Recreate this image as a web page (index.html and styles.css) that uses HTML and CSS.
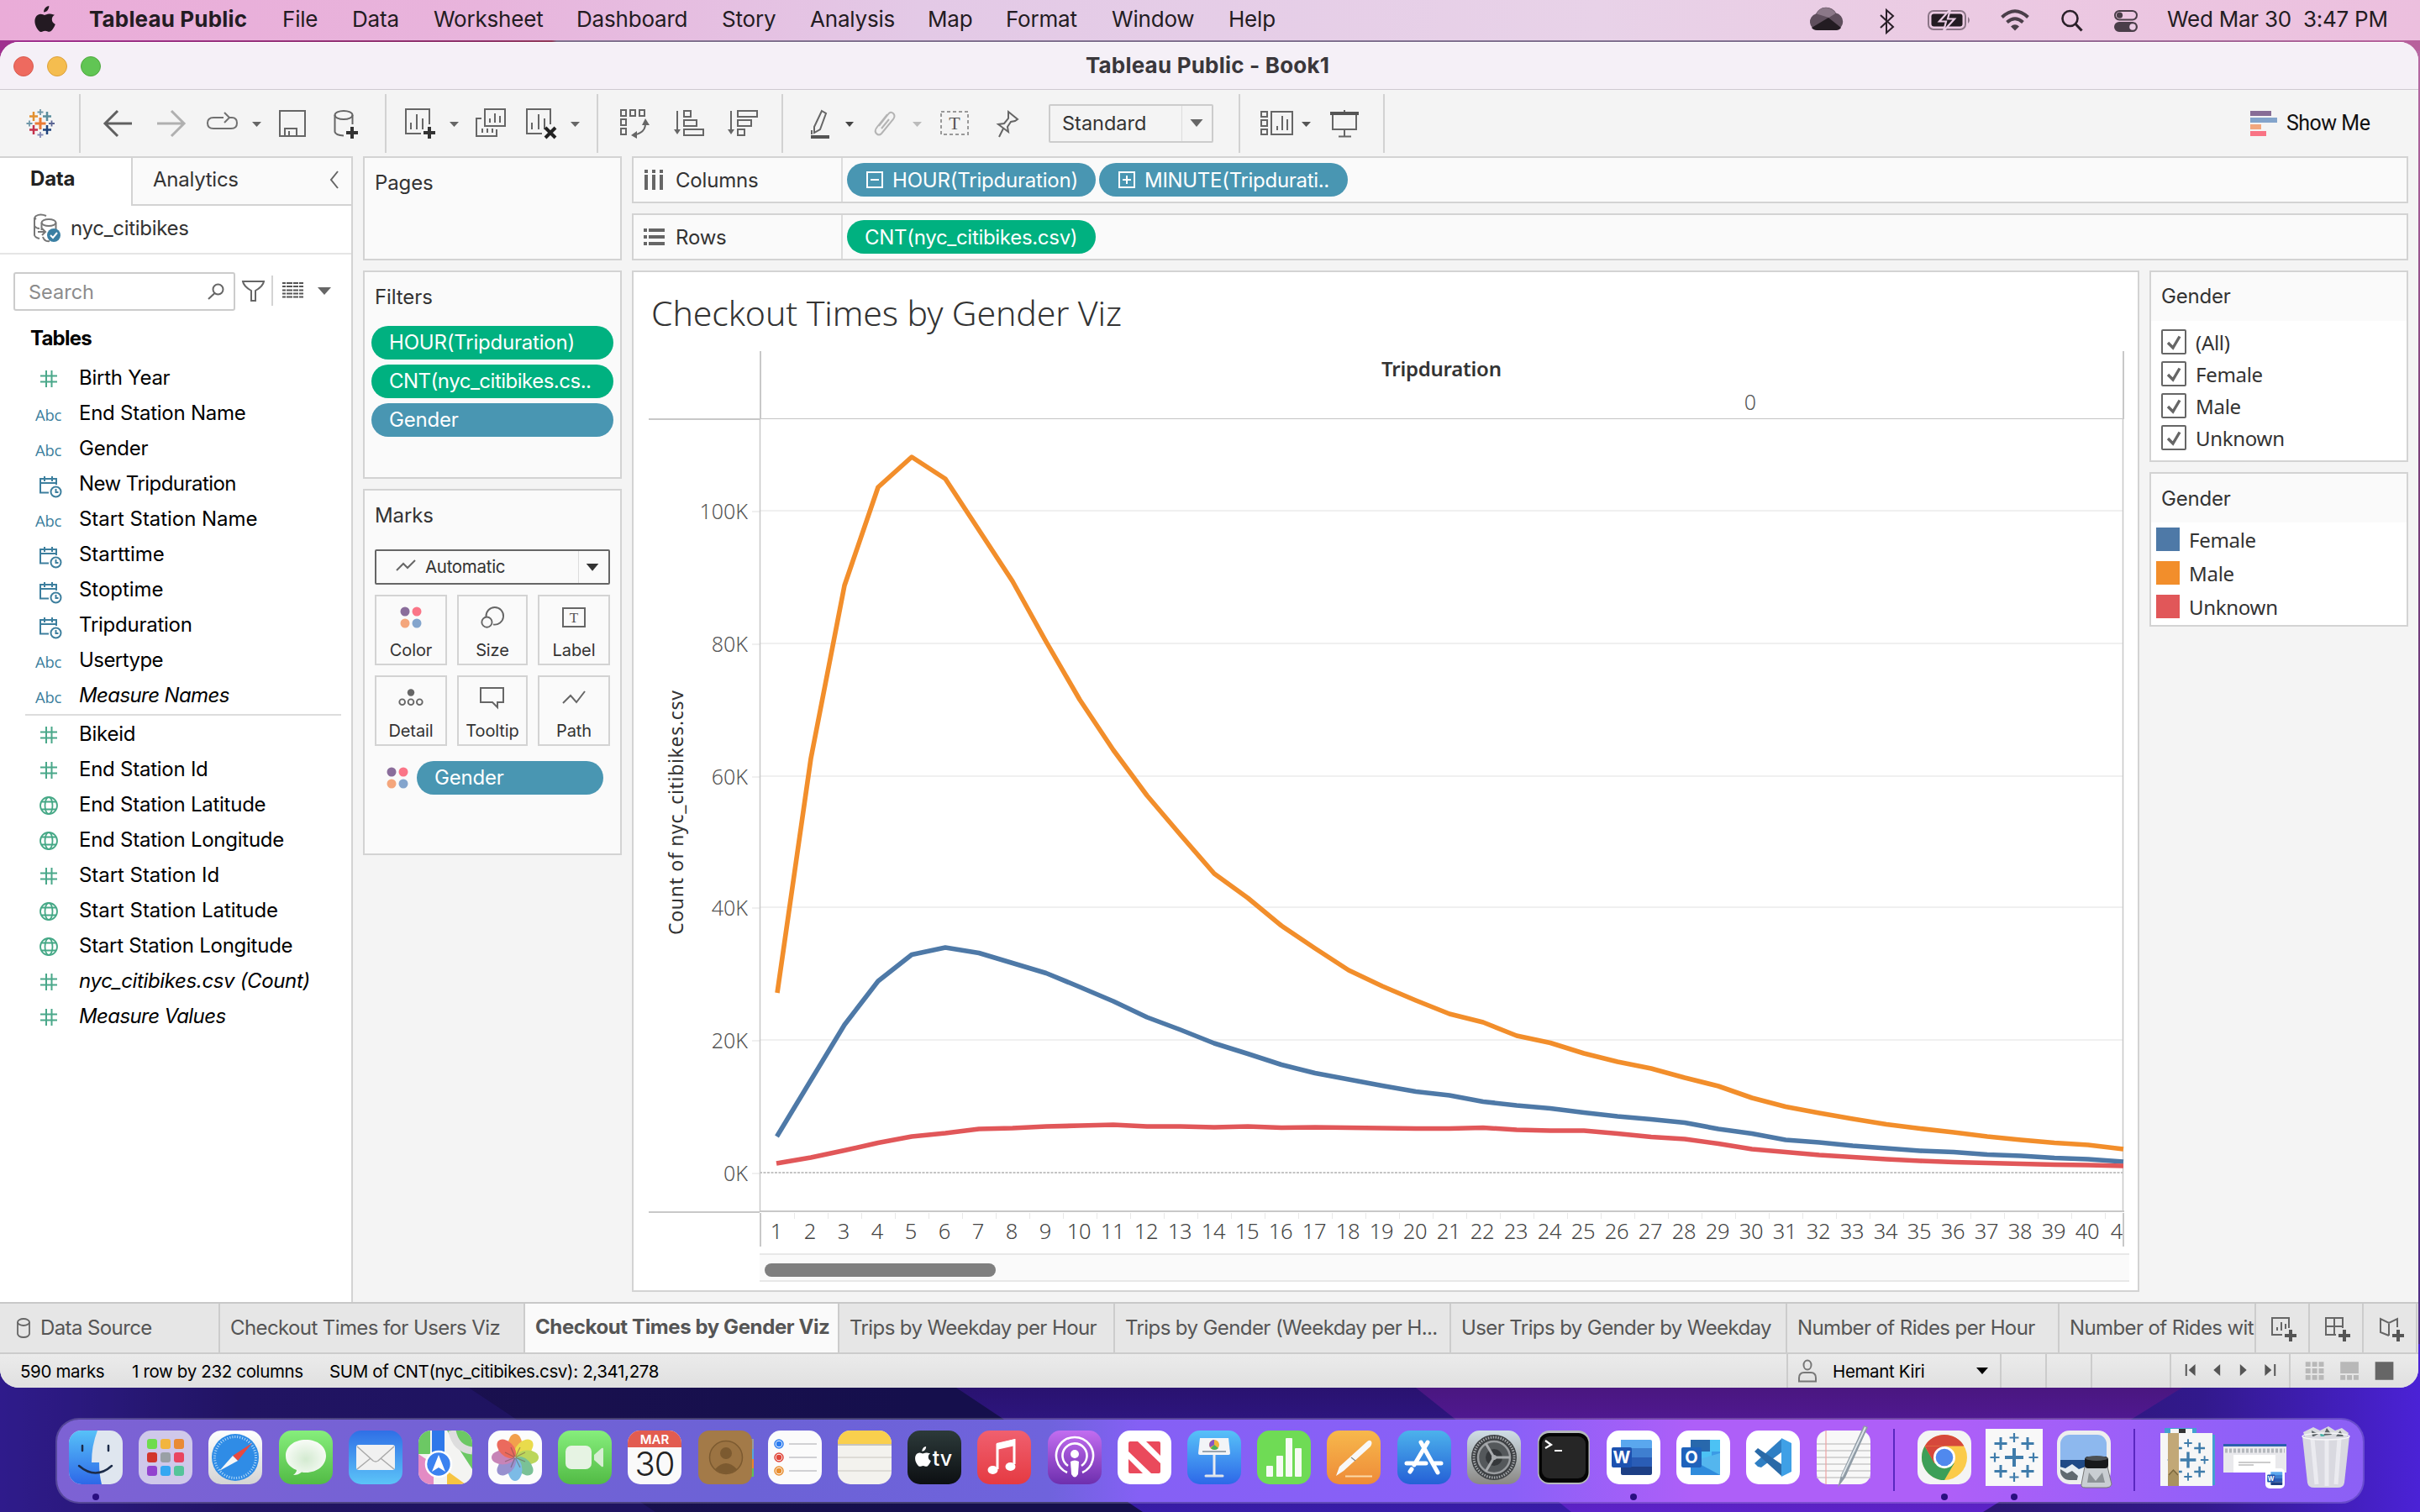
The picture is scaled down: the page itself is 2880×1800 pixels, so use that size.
FILE: index.html
```html
<!DOCTYPE html>
<html lang="en">
<head>
<meta charset="utf-8">
<title>Tableau Public - Book1</title>
<link rel="stylesheet" href="styles.css">
</head>
<body>
<svg class="defs" width="0" height="0">
  <defs>
    <symbol id="num" viewBox="0 0 32 24"><path d="M13 2v20M19.500 2v20M6 8.500h20M6 15.500h20" fill="none" stroke="#4aa88a" stroke-width="2"/></symbol>
    <symbol id="geo" viewBox="0 0 32 24"><g fill="none" stroke="#45a886" stroke-width="1.800"><circle cx="16" cy="12" r="10"/><ellipse cx="16" cy="12" rx="4.500" ry="10"/><path d="M7.500 7.500h17M7.500 16.500h17"/></g></symbol>
    <symbol id="date" viewBox="0 0 32 28"><g fill="none" stroke="#3d7f9e" stroke-width="2"><path d="M16 21.500H6V5h19v7M6 10h19M11 2v6M20 2v6"/><circle cx="24.500" cy="20.500" r="6"/><path d="M24.500 17v4h3"/></g></symbol>
    <symbol id="dots" viewBox="0 0 28 28"><circle cx="7" cy="7" r="5.500" fill="#8a6d9b"/><circle cx="21" cy="7" r="5.500" fill="#fa7587"/><circle cx="7" cy="21" r="5.500" fill="#f4a67c"/><circle cx="21" cy="21" r="5.500" fill="#84a5cd"/></symbol>
    <symbol id="check" viewBox="0 0 30 30"><rect x="1" y="1" width="28" height="28" rx="1" fill="#fff" stroke="#666" stroke-width="2"/><path d="M8 16l6 6L22 8.500" fill="none" stroke="#666" stroke-width="3.400"/></symbol>
    <symbol id="spark" viewBox="-34 -34 68 68">
      <g fill="none" stroke="#3f7cab">
        <path stroke-width="4" d="M0-11V11M-11 0H11"/>
        <path stroke-width="3" d="M-16-24v15M-23.500-16.500h15M16-24v15M8.500-16.500h15M-16 9v15M-23.500 16.500h15M16 9v15M8.500 16.500h15"/>
        <path stroke-width="2.200" d="M0-29v11M-5.500-23.500h11M0 18v11M-5.500 23.500h11M-23-5.500v11M-28.500 0h11M23-5.500v11M17.500 0h11"/>
      </g>
    </symbol>
    <symbol id="wordmark" viewBox="0 0 64 64">
      <path fill="#5aa7ee" d="M17 11h35a2 2 0 0 1 2 2v9H17z"/><path fill="#3f7fd0" d="M17 21h37v11H17z"/><path fill="#2a5db6" d="M17 32h37v11H17z"/><path fill="#1d3f85" d="M17 43h37v8a2 2 0 0 1-2 2H19a2 2 0 0 1-2-2z"/>
      <rect x="6" y="20" width="24" height="24" rx="2" fill="#1d52b0"/><text x="18" y="39" text-anchor="middle" class="tile-letter">W</text>
    </symbol>
    <symbol id="apple" viewBox="0 0 26 31"><path d="M18.300 0c.2 2-.6 3.900-1.700 5.200-1.200 1.400-2.900 2.300-4.500 2.200-.2-1.900.7-3.800 1.700-5C15 1 16.900.1 18.300 0zM25 10.700c-2.100 1.300-3.200 3.100-3.200 5.400 0 2.700 1.500 4.800 4 5.800-.6 1.900-1.600 3.800-2.900 5.500-1.200 1.700-2.400 3.400-4.400 3.400-1.900 0-2.500-1.100-4.800-1.100-2.200 0-2.900 1.100-4.700 1.200-1.900.1-3.300-1.800-4.500-3.500C1.900 23.900.1 17.700 2.600 13.300c1.200-2.200 3.500-3.600 5.900-3.600 1.900 0 3.600 1.200 4.700 1.200 1.100 0 3.200-1.500 5.500-1.300 1 0 3.600.4 6.300 1.100z"/></symbol>
    <linearGradient id="gGreen" x2="0" y2="1"><stop stop-color="#86ee7c"/><stop offset="1" stop-color="#52bb45"/></linearGradient>
    <linearGradient id="gBlue" x2="0" y2="1"><stop stop-color="#2f6fe6"/><stop offset="1" stop-color="#5cc4f8"/></linearGradient>
    <linearGradient id="gSky" x2="0" y2="1"><stop stop-color="#57c1f8"/><stop offset="1" stop-color="#2d68e8"/></linearGradient>
    <linearGradient id="gStore" x2="0" y2="1"><stop stop-color="#4cb2ec"/><stop offset="1" stop-color="#2560d6"/></linearGradient>
    <linearGradient id="gRed" x2="0" y2="1"><stop stop-color="#f0606f"/><stop offset="1" stop-color="#e53a42"/></linearGradient>
    <linearGradient id="gPod" x2="0" y2="1"><stop stop-color="#c26df0"/><stop offset="1" stop-color="#6e2fae"/></linearGradient>
    <linearGradient id="gOrange" x2="0" y2="1"><stop stop-color="#f7b84c"/><stop offset="1" stop-color="#ee8b38"/></linearGradient>
    <linearGradient id="gWhite" x2="0" y2="1"><stop stop-color="#fff"/><stop offset="1" stop-color="#d4d4d4"/></linearGradient>
    <linearGradient id="gDark" x2="0" y2="1"><stop stop-color="#2c3a3a"/><stop offset="1" stop-color="#0c0f12"/></linearGradient>
    <linearGradient id="gGear" x2="0" y2="1"><stop stop-color="#cfdde6"/><stop offset="1" stop-color="#8a8884"/></linearGradient>
    <radialGradient id="gBubble" cx=".5" cy=".55" r=".6"><stop stop-color="#d3ead0"/><stop offset="1" stop-color="#fbfdfa"/></radialGradient>
    <linearGradient id="wTop" x2="1" y2="0"><stop stop-color="#a03090"/><stop offset=".2" stop-color="#8c3068"/><stop offset=".228" stop-color="#903858"/><stop offset=".23" stop-color="#80708e"/><stop offset=".78" stop-color="#807090"/><stop offset="1" stop-color="#b8609c"/></linearGradient>
    <linearGradient id="wBase" x2="1" y2="0"><stop stop-color="#321d90"/><stop offset=".1" stop-color="#1c1150"/><stop offset=".38" stop-color="#150f4c"/></linearGradient>
    <linearGradient id="wRight" x2="1" y2="0"><stop stop-color="#2b1672"/><stop offset=".5" stop-color="#32198c"/><stop offset="1" stop-color="#4b22d6"/></linearGradient>
    <linearGradient id="wSide" x2="0" y2="1"><stop stop-color="#b86aa4"/><stop offset=".3" stop-color="#7a3f78"/><stop offset="1" stop-color="#4a2a86"/></linearGradient>
    <linearGradient id="wMid" x2="0" y2="1"><stop stop-color="#240f5c"/><stop offset="1" stop-color="#381ca8"/></linearGradient>
    <linearGradient id="wPink" x2="0" y2="1"><stop stop-color="#42146a"/><stop offset=".4" stop-color="#4e188c"/><stop offset="1" stop-color="#5c22c8"/></linearGradient>
  </defs>
</svg>

<svg class="wallpaper" viewBox="0 0 2880 1800" aria-hidden="true">
  <rect width="2880" height="1800" fill="url(#wBase)"/>
  <rect width="2880" height="200" fill="url(#wTop)"/>
  <rect x="2800" y="60" width="80" height="1600" fill="url(#wSide)"/>
  <path d="M0 1600h480l300 200H0z" fill="#2b1a84" opacity=".35"/>
  <path d="M1060 1600l300 200h1000V1600z" fill="url(#wMid)"/>
  <path d="M1620 1600l250 200h900V1600z" fill="url(#wPink)"/>
  <path d="M2680 1600l-320 200h520V1600z" fill="url(#wRight)"/>
</svg>

<header class="menubar">
  <svg class="apple" viewBox="0 0 26 31"><use href="#apple" fill="#231a22"/></svg>
  <nav class="menus">
    <span class="m-app">Tableau Public</span><span class="m1">File</span><span class="m2">Data</span><span class="m3">Worksheet</span><span class="m4">Dashboard</span><span class="m5">Story</span><span class="m6">Analysis</span><span class="m7">Map</span><span class="m8">Format</span><span class="m9">Window</span><span class="m10">Help</span>
  </nav>
  <svg class="tray" viewBox="2150 0 400 48">
    <path d="M2163 36a10 10 0 0 1-2-19.500 13.500 13.500 0 0 1 24-1 10.500 10.500 0 0 1 0 20.500z" fill="#5f4f5d"/>
    <path d="M2162 16.500c3-9 17-10 22.500-.5l-8 5z" fill="#8b7888"/>
    <path d="M2156 33l20-12 15 12q-2 3-6 3h-22q-5 0-7-3z" fill="#231c22"/>
    <path d="M2238 18l15 14-8 7V12l8 7-15 14" fill="none" stroke="#2a2029" stroke-width="2"/>
    <rect x="2295" y="13" width="44" height="22" rx="6" fill="none" stroke="#8b7587" stroke-width="2"/><rect x="2298.500" y="16.500" width="37" height="15" rx="3" fill="#231c22"/><path d="M2342 20q4 4 0 8z" fill="#8b7587"/><path d="M2321 11l-13 14.500h8l-3 11.500 13-14.500h-8z" fill="#231c22" stroke="#e9cce4" stroke-width="2.200"/>
    <g fill="none" stroke="#4a3e49" stroke-width="4"><path d="M2382.500 20.500q15.500-14.500 31 0"/><path d="M2388.500 26.500q9.500-8.500 19 0"/></g><path d="M2393 31.500q5-4.500 10 0l-5 5z" fill="#4a3e49"/>
    <circle cx="2463.500" cy="22" r="9" fill="none" stroke="#2a2029" stroke-width="2.600"/><path d="M2470 28.500l7.500 8" stroke="#2a2029" stroke-width="3.200"/>
    <rect x="2517" y="13" width="26" height="10.500" rx="5.200" fill="none" stroke="#4a3e49" stroke-width="2"/><circle cx="2522.500" cy="18.200" r="3.600" fill="#4a3e49"/>
    <rect x="2516" y="26" width="28" height="12" rx="6" fill="#4a3e49"/><circle cx="2538" cy="32" r="3.800" fill="#ebcbe4"/>
  </svg>
  <span class="clock">Wed Mar 30&nbsp; 3:47 PM</span>
</header>

<main class="window">
  <div class="titlebar">
    <i class="light red"></i><i class="light yellow"></i><i class="light green"></i>
    <h1>Tableau Public - Book1</h1>
  </div>

  <div class="toolbar">
    <svg class="tg g1" viewBox="0 111 94 70">
      <g fill="none" stroke-width="2.500"><path stroke="#ea7b35" stroke-width="3" d="M48 139v14M41.500 146h13"/><path stroke="#e2902f" d="M40 132v11M35 137.500h10"/><path stroke="#5a8d9c" d="M56 132v11M51 137.500h10"/><path stroke="#c4314b" d="M40 148v11M35 153.500h10"/><path stroke="#20447c" d="M56 148v11M51 153.500h10"/><g stroke-width="1.800"><path stroke="#6f97a8" d="M48 129v7M44.500 132.500h7M35 142.500v7M31.500 146h7"/><path stroke="#5a6594" d="M61.500 142.500v7M58 146h7"/><path stroke="#8189b5" d="M48 156v7M44.500 159.500h7"/></g></g>
    </svg>
    <svg class="tg g2" viewBox="96 111 362 70">
      <path d="M140 131l-15 15 15 15M125 146h32" fill="none" stroke="#606060" stroke-width="3"/>
      <path d="M204 131l15 15-15 15M219 146h-32" fill="none" stroke="#b0b0b0" stroke-width="3"/>
      <path d="M266 139h-12q-7 0-7 6.500t7 6.500h21q7 0 7-6.500t-6-6.500h-4M267 133l6 6-6 6" fill="none" stroke="#707070" stroke-width="2"/>
      <path d="M300 144h11l-5.500 6z" fill="#666"/>
      <path d="M333 131h30v30h-30zM339 161v-9h14v9M344 155v6" fill="none" stroke="#666" stroke-width="2"/>
      <ellipse cx="409" cy="136" rx="10.500" ry="5" fill="none" stroke="#666" stroke-width="2"/><path d="M398.500 136v20q1 4 10.500 4.500M419.500 136v11" fill="none" stroke="#666" stroke-width="2"/><path d="M419 150v14M412 157h14" stroke="#333" stroke-width="4"/>
    </svg>
    <svg class="tg g3" viewBox="460 111 250 70">
      <g fill="none" stroke="#666" stroke-width="2"><path d="M511 147v-18h-28v29h18M489 153v-8M496 153v-18M503 153v-13"/>
      <path d="M577 129h24v20h-24zM583 145v-5M589 145v-11M595 145v-8M573 140h-6v21h24v-8M574 157v-5M580 157v-5M586 157v-5"/>
      <path d="M655 147v-18h-28v29h18M633 153v-8M641 153v-18M648 153v-13"/></g>
      <path d="M511 150v14M504 157h14" stroke="#333" stroke-width="4"/><path d="M649 151l12 12M661 151l-12 12" stroke="#222" stroke-width="4"/>
      <path d="M535 144h11l-5.500 6zM679 144h11l-5.500 6z" fill="#666"/>
    </svg>
    <svg class="tg g4" viewBox="712 111 218 70">
      <g fill="none" stroke="#666" stroke-width="2"><path d="M739 130h6v7h-6zM750 130h6v7h-6zM761 130h6v7h-6zM739 141h6v7h-6zM739 152h6v7h-6z"/><path d="M768 145q1 12-14 15"/>
      <path d="M806 131v24M814 131h8v7h-8zM814 142h15v7h-15zM814 153h23v7h-23zM870 131v24M878 131h23v7h-23zM878 142h16v7h-16zM878 153h8v7h-8z"/></g>
      <path d="M768 140l5 8h-9zM751 160l7-5v9zM802 153h8l-4 6zM866 153h8l-4 6z" fill="#666"/>
    </svg>
    <svg class="tg g5" viewBox="932 111 316 70">
      <path d="M978 131l5 3-7 19-7 4v-7zM966 154v5" fill="none" stroke="#666" stroke-width="2"/><path d="M965 160h22v4h-22z" fill="#555"/><path d="M1006 144h10l-5 6z" fill="#444"/>
      <path d="M1046 149l11-14q3-4 6-1t0 7l-14 17q-3 3-6 0t1-8l12-15M1049 152l9-11" fill="none" stroke="#b4b4b4" stroke-width="2"/><path d="M1086 144h11l-5.500 6z" fill="#bbb"/>
      <rect x="1120" y="132" width="32" height="27" fill="none" stroke="#999" stroke-width="2" stroke-dasharray="4 3"/><text class="t-serif" x="1136" y="153" text-anchor="middle" font-size="22">T</text>
      <path d="M1200 132l11 9-3 2-5 1-4 6 1 6-12-9 7-1 5-6zM1194 152l-5 10" fill="none" stroke="#666" stroke-width="2"/>
    </svg>
    <div class="select"><span>Standard</span><svg viewBox="0 0 34 42"><path d="M9 16h15l-7.500 9z" fill="#666"/></svg></div>
    <svg class="tg g6" viewBox="1476 111 170 70">
      <g fill="none" stroke="#666" stroke-width="2"><path d="M1501 132h7v6h-7zM1501 142h7v7h-7zM1501 153h7v6h-7zM1513 132h25v27h-25zM1520 154v-5M1526 154v-17M1532 154v-13"/>
      <path d="M1586 135v18h28v-18M1600 130v3M1600 153v8M1593 161.500h15"/></g><path d="M1583 132h34v4h-34z" fill="#555"/><path d="M1549 144h11l-5.500 6z" fill="#555"/>
    </svg>
    <div class="showme"><svg viewBox="0 0 32 30"><path d="M0 0h25v6H0z" fill="#876d96"/><path d="M0 8h32v6H0z" fill="#83a4cb"/><path d="M0 16h13v6H0z" fill="#f3a77e"/><path d="M0 24h19v6H0z" fill="#f97384"/></svg><span>Show Me</span></div>
  </div>

  <div class="workspace">
    <aside class="data-pane">
      <div class="pane-tabs"><b>Data</b><div><span>Analytics</span><svg viewBox="0 0 12 22"><path d="M10 1L2 11l8 10" fill="none" stroke="#666" stroke-width="2"/></svg></div></div>
      <div class="source">
        <svg viewBox="0 0 36 36"><g fill="none" stroke="#777" stroke-width="2"><path d="M17 3Q10 0 5 3q-3 2 0 4M3 5v21q1 3 6 4M3 15q2 3 6 3"/><ellipse cx="20" cy="11" rx="8.500" ry="4"/><path d="M11.500 11v9M28.500 11v8M7 22h8M12 18l4 4-4 4M13 28q2 6 8 5"/></g><circle cx="26" cy="26" r="8" fill="#3a7fa3"/><path d="M22 26l3 3 5-6" fill="none" stroke="#fff" stroke-width="2"/></svg>
        <span>nyc_citibikes</span>
      </div>
      <div class="search-row">
        <div class="search"><span>Search</span><svg viewBox="0 0 20 20"><circle cx="12.500" cy="7.500" r="6" fill="none" stroke="#666" stroke-width="2"/><path d="M8.500 12L1 19" stroke="#666" stroke-width="2"/></svg></div>
        <svg class="filter-tools" viewBox="284 324 130 46"><path d="M289 335h25q-1 6-10 11v12h-5v-12q-9-5-10-11z" fill="none" stroke="#666" stroke-width="2"/><path d="M324 328v36" stroke="#d4d4d4" stroke-width="2"/><path d="M336 337h25M336 341h25M336 345.500h25M336 349.500h25M336 353.500h25" stroke="#555" stroke-width="2" stroke-dasharray="4 1 7 1 6 1 5 0"/><path d="M378 342h16l-8 9z" fill="#666"/></svg>
      </div>
      <h2>Tables</h2>
      <ul class="fields">
        <li><svg class="fi"><use href="#num"/></svg>Birth Year</li>
        <li><i>Abc</i>End Station Name</li>
        <li><i>Abc</i>Gender</li>
        <li><svg class="fd"><use href="#date"/></svg><span class="tight">New Tripduration</span></li>
        <li><i>Abc</i><span class="loose">Start Station Name</span></li>
        <li><svg class="fd"><use href="#date"/></svg><span class="loose">Starttime</span></li>
        <li><svg class="fd"><use href="#date"/></svg><span class="loose">Stoptime</span></li>
        <li><svg class="fd"><use href="#date"/></svg>Tripduration</li>
        <li><i>Abc</i><span class="tight">Usertype</span></li>
        <li><i>Abc</i><em>Measure Names</em></li>
      </ul>
      <ul class="fields measures">
        <li><svg class="fi"><use href="#num"/></svg>Bikeid</li>
        <li><svg class="fi"><use href="#num"/></svg>End Station Id</li>
        <li><svg class="fi"><use href="#geo"/></svg>End Station Latitude</li>
        <li><svg class="fi"><use href="#geo"/></svg>End Station Longitude</li>
        <li><svg class="fi"><use href="#num"/></svg><span class="loose">Start Station Id</span></li>
        <li><svg class="fi"><use href="#geo"/></svg><span class="loose">Start Station Latitude</span></li>
        <li><svg class="fi"><use href="#geo"/></svg>Start Station Longitude</li>
        <li><svg class="fi"><use href="#num"/></svg><em class="count">nyc_citibikes.csv (Count)</em></li>
        <li><svg class="fi"><use href="#num"/></svg><em>Measure Values</em></li>
      </ul>
    </aside>

    <section class="cards">
      <div class="card pages"><h3>Pages</h3></div>
      <div class="card filters"><h3>Filters</h3>
        <div class="pill green">HOUR(Tripduration)</div><div class="pill green narrow">CNT(nyc_citibikes.cs..</div><div class="pill blue">Gender</div>
      </div>
      <div class="card marks"><h3>Marks</h3>
        <div class="mark-type"><svg class="zig" viewBox="0 0 24 14"><path d="M1 13l8-8 5 5 9-9" fill="none" stroke="#666" stroke-width="2"/></svg><span>Automatic</span><svg class="arrow" viewBox="0 0 36 38"><path d="M9 15h15l-7.500 9z" fill="#333"/></svg></div>
        <div class="mark-grid">
          <div><svg viewBox="0 0 28 28"><use href="#dots"/></svg>Color</div>
          <div><svg viewBox="0 0 32 28"><g fill="none" stroke="#666" stroke-width="2"><path d="M8 13A11 11 0 1 1 17 23"/><circle cx="9" cy="20" r="6.500"/></g></svg>Size</div>
          <div><svg viewBox="0 0 28 28"><rect x="1" y="3" width="26" height="22" fill="none" stroke="#666" stroke-width="2"/><text class="t-serif" x="14" y="20" text-anchor="middle" font-size="17">T</text></svg>Label</div>
          <div><svg viewBox="0 0 32 28"><circle cx="16" cy="7" r="4.500" fill="#666"/><g fill="none" stroke="#666" stroke-width="2"><circle cx="5" cy="19" r="3.600"/><circle cx="16" cy="19" r="3.600"/><circle cx="27" cy="19" r="3.600"/></g></svg>Detail</div>
          <div><svg viewBox="0 0 30 28"><path d="M1 2h27v17h-7v6l-6-6H1z" fill="none" stroke="#666" stroke-width="2"/></svg>Tooltip</div>
          <div><svg viewBox="0 0 30 28"><path d="M2 20l9-9 7 8L28 6" fill="none" stroke="#666" stroke-width="2"/></svg>Path</div>
        </div>
        <div class="mark-pill"><svg viewBox="0 0 28 28"><use href="#dots"/></svg><div class="pill blue">Gender</div></div>
      </div>
    </section>

    <section class="canvas">
      <div class="shelf"><div class="shelf-name"><svg viewBox="0 0 26 26"><path d="M3 1v4M12 1v4M21 1v4M3 7v18M12 7v18M21 7v18" stroke="#666" stroke-width="4"/></svg>Columns</div>
        <div class="pill blue wide"><svg viewBox="0 0 20 20"><path d="M1 1h18v18H1zM5 10h10" fill="none" stroke="#fff" stroke-width="2"/></svg>HOUR(Tripduration)</div>
        <div class="pill blue wide min"><svg viewBox="0 0 20 20"><path d="M1 1h18v18H1zM5 10h10M10 5v10" fill="none" stroke="#fff" stroke-width="2"/></svg>MINUTE(Tripdurati..</div></div>
      <div class="shelf"><div class="shelf-name"><svg viewBox="0 0 26 26"><path d="M0 5h4M0 13h4M0 21h4M6 5h19M6 13h19M6 21h19" stroke="#666" stroke-width="4"/></svg>Rows</div>
        <div class="pill green wide cnt">CNT(nyc_citibikes.csv)</div></div>
      <div class="stage">
        <div class="viz">
          <svg class="plot" viewBox="754 324 1790 1120">
            <text class="book title" x="775" y="388" textLength="560">Checkout Times by Gender Viz</text>
            <text class="book semi" x="1644" y="448" textLength="143">Tripduration</text>
            <text class="book tick" x="2083" y="488" text-anchor="middle">0</text>
            <path d="M905 418v80M2527 418v80M772 499h133" stroke="#c8c8c8" stroke-width="2"/>
            <path d="M904 498.500h1624" stroke="#c4c4c4" stroke-width="1"/>
            <g stroke="#f0f0f0" stroke-width="2"><path d="M904 608h1623M904 766h1623M904 924h1623M904 1080h1623M904 1238h1623M895 609h9M895 767h9M895 925h9M895 1081h9M895 1239h9M895 1397h9"/></g>
            <path d="M904 1396h1623" stroke="#c4c4c4" stroke-width="2" stroke-dasharray="3 1.500"/>
            <path d="M904.500 498v945M2526.500 498v945" stroke="#c8c8c8" stroke-width="1.500"/>
            <g class="book tick" text-anchor="end"><text x="890" y="618">100K</text><text x="890" y="776">80K</text><text x="890" y="934">60K</text><text x="890" y="1090">40K</text><text x="890" y="1248">20K</text><text x="890" y="1406">0K</text></g>
            <text class="book axis" transform="translate(813 1113) rotate(-90)" textLength="291">Count of nyc_citibikes.csv</text>
            <g fill="none" stroke-width="5.600" stroke-linejoin="round">
              <path stroke="#f28e2b" d="M925 1182L965 903 1005 697 1045 580 1085 544 1125 570 1165 631 1205 692 1245 764 1285 833 1325 893 1365 947 1405 994 1445 1040 1485 1069 1525 1102 1565 1129 1605 1155 1645 1174 1685 1191 1725 1207 1765 1217 1805 1233 1845 1241.500 1885 1254 1925 1264 1965 1272 2005 1283 2045 1293 2085 1307 2125 1317.500 2165 1325 2205 1332 2245 1338.500 2285 1343.500 2325 1348 2365 1353 2405 1357 2445 1360.500 2485 1363 2527 1368"/>
              <path stroke="#4e79a7" d="M924.500 1353L965 1286 1005 1220 1045 1168 1085 1136.500 1125 1128 1165 1134.500 1205 1146.500 1245 1158.500 1285 1175 1325 1192 1365 1211 1405 1226 1445 1242 1485 1254.500 1525 1267.500 1565 1277.500 1605 1285 1645 1292.500 1685 1299.500 1725 1304 1765 1311.500 1805 1316 1845 1319.500 1885 1324.500 1925 1329 1965 1332.500 2005 1336.500 2045 1344 2085 1349.500 2125 1357 2165 1360 2205 1364 2245 1367 2285 1370 2325 1371.500 2365 1374.500 2405 1376 2445 1378.500 2485 1380 2527 1383"/>
              <path stroke="#e15759" d="M924 1385L965 1378 1005 1369.500 1045 1360.500 1085 1353 1125 1349 1165 1344 1205 1343 1245 1341 1285 1340 1325 1339 1365 1341 1405 1341 1445 1342 1485 1341 1525 1342.500 1565 1342 1605 1342.500 1645 1343 1685 1343.500 1725 1343.500 1765 1342.500 1805 1345 1845 1346 1885 1346 1925 1349.500 1965 1353.500 2005 1356 2045 1361.500 2085 1368 2125 1371.500 2165 1375 2205 1377.500 2245 1380 2285 1382 2325 1383.500 2365 1384.500 2405 1385.500 2445 1386.500 2485 1387 2527 1388"/>
            </g>
            <path d="M904 1442h1624M772 1443h132" stroke="#c8c8c8" stroke-width="2"/>
          </svg>
          <div class="x-axis"><span>1</span><span>2</span><span>3</span><span>4</span><span>5</span><span>6</span><span>7</span><span>8</span><span>9</span><span>10</span><span>11</span><span>12</span><span>13</span><span>14</span><span>15</span><span>16</span><span>17</span><span>18</span><span>19</span><span>20</span><span>21</span><span>22</span><span>23</span><span>24</span><span>25</span><span>26</span><span>27</span><span>28</span><span>29</span><span>30</span><span>31</span><span>32</span><span>33</span><span>34</span><span>35</span><span>36</span><span>37</span><span>38</span><span>39</span><span>40</span><span class="last">4</span></div>
          <div class="track"><div class="thumb"></div></div>
        </div>
        <div class="legends">
          <div class="legend checks"><h3>Gender</h3>
            <p><svg><use href="#check"/></svg>(All)</p><p><svg><use href="#check"/></svg>Female</p><p><svg><use href="#check"/></svg>Male</p><p><svg><use href="#check"/></svg>Unknown</p></div>
          <div class="legend colors"><h3>Gender</h3>
            <p><b class="c-female"></b>Female</p><p><b class="c-male"></b>Male</p><p><b class="c-unknown"></b>Unknown</p></div>
        </div>
      </div>
    </section>
  </div>

  <div class="sheets">
    <div class="s0"><svg viewBox="0 0 16 24"><g fill="none" stroke="#666" stroke-width="1.800"><ellipse cx="8" cy="5" rx="7" ry="4"/><path d="M1 5v14q1 4 7 4t7-4V5"/></g></svg>Data Source</div>
    <div class="s1">Checkout Times for Users Viz</div>
    <div class="s2 active">Checkout Times by Gender Viz</div>
    <div class="s3">Trips by Weekday per Hour</div>
    <div class="s4">Trips by Gender (Weekday per H...</div>
    <div class="s5">User Trips by Gender by Weekday</div>
    <div class="s6">Number of Rides per Hour</div>
    <div class="s7">Number of Rides wit</div>
    <svg class="sheet-tools" viewBox="2685 1552 191 58">
      <g fill="none" stroke="#666" stroke-width="2"><path d="M2724 1581v-12h-20v20h12M2710 1584v-4M2715 1584v-10M2720 1582v-6M2788 1581v-12h-20v20h12M2778 1569v20M2768 1579h20M2853 1580v-10l-10 5-10-5v16l10 4M2843 1575v15"/></g>
      <path d="M2726 1583v14M2719 1590h14M2790 1583v14M2783 1590h14M2854 1583v14M2847 1590h14" stroke="#555" stroke-width="4"/>
      <path d="M2748 1552v58M2812 1552v58M2876 1552v58" stroke="#ccc" stroke-width="2"/>
    </svg>
  </div>
  <div class="status">
    <span class="st1">590 marks</span><span class="st2">1 row by 232 columns</span><span class="st3">SUM of CNT(nyc_citibikes.csv): 2,341,278</span>
    <div class="user"><svg viewBox="0 0 22 28"><g fill="none" stroke="#777" stroke-width="2"><ellipse cx="11" cy="7" rx="4.500" ry="5.500"/><path d="M1 26.500v-4q0-6.500 6-6.500h8q6 0 6 6.500v4z"/></g></svg><span>Hemant Kiri</span><svg class="tri" viewBox="0 0 14 8"><path d="M0 0h14L7 8z"/></svg></div>
    <i class="w1"></i><i class="w1"></i><i class="w2"></i>
    <svg class="pager" viewBox="2583 1612 142 40"><path d="M2601 1624v14M2708 1624v14" stroke="#555" stroke-width="2"/><path d="M2612 1624v14l-8-7zM2642 1624v14l-8-7zM2666 1624v14l8-7zM2696 1624v14l8-7z" fill="#555"/></svg>
    <svg class="views" viewBox="2725 1612 153 40"><path d="M2743 1621h6v6h-6zM2751 1621h6v6h-6zM2759 1621h6v6h-6zM2743 1629h6v6h-6zM2751 1629h6v6h-6zM2759 1629h6v6h-6zM2743 1637h6v6h-6zM2751 1637h6v6h-6zM2759 1637h6v6h-6zM2785 1621h22v14h-22zM2785 1637h6v6h-6zM2793 1637h6v6h-6zM2801 1637h6v6h-6z" fill="#b8b8b8"/><path d="M2827 1621h22v22h-22z" fill="#666"/></svg>
  </div>
</main>

<footer class="dock">
  <div class="app run"><svg viewBox="0 0 64 64"><rect width="64" height="64" rx="15" fill="#dfe6ef"/><path d="M15 0h19q-7 18-7 38h9q0 14 3 26H15A15 15 0 0 1 0 49V15A15 15 0 0 1 15 0z" fill="url(#gSky)"/><path d="M16 18v6M47 18v6" stroke="#1c2b48" stroke-width="2.500" stroke-linecap="round"/><path d="M12 42q20 17 39 0" fill="none" stroke="#1c2b48" stroke-width="2.500" stroke-linecap="round"/></svg></div>
  <div class="app"><svg viewBox="0 0 64 64"><rect width="64" height="64" rx="15" fill="#cfc8ea"/><g><rect x="10" y="10" width="12" height="12" rx="3" fill="#6fdc4e"/><rect x="26" y="10" width="12" height="12" rx="3" fill="#f2b53e"/><rect x="42" y="10" width="12" height="12" rx="3" fill="#e98a35"/><rect x="10" y="26" width="12" height="12" rx="3" fill="#d2352c"/><rect x="26" y="26" width="12" height="12" rx="3" fill="#9aa0a6"/><rect x="42" y="26" width="12" height="12" rx="3" fill="#e94560"/><rect x="10" y="42" width="12" height="12" rx="3" fill="#9242cf"/><rect x="26" y="42" width="12" height="12" rx="3" fill="#36a7f2"/><rect x="42" y="42" width="12" height="12" rx="3" fill="#55c49a"/></g></svg></div>
  <div class="app"><svg viewBox="0 0 64 64"><rect width="64" height="64" rx="15" fill="url(#gWhite)"/><circle cx="32" cy="32" r="28" fill="#2f8ce6"/><circle cx="32" cy="32" r="24.500" fill="none" stroke="#b9dcf8" stroke-width="3" stroke-dasharray="1 2"/><path d="M52 15L35 36l-6-6z" fill="#e8493f"/><path d="M13 48l16-18 6 6z" fill="#f4f6f8"/></svg></div>
  <div class="app"><svg viewBox="0 0 64 64"><rect width="64" height="64" rx="15" fill="url(#gGreen)"/><path d="M32 11c14 0 24 8 24 19S46 50 32 50q-3 0-5-.5Q23 53 17 53q4-3 4-6Q8 42 8 30c0-11 10-19 24-19z" fill="url(#gBubble)"/></svg></div>
  <div class="app"><svg viewBox="0 0 64 64"><rect width="64" height="64" rx="15" fill="url(#gBlue)"/><rect x="9" y="17" width="46" height="30" rx="3" fill="#f1f1f1"/><path d="M10 19l19 17q3 2 6 0l19-17M10 46l16-13M54 46L38 33" fill="none" stroke="#a9a9a9" stroke-width="1.500"/></svg></div>
  <div class="app"><svg viewBox="0 0 64 64"><clipPath id="cm"><rect width="64" height="64" rx="15"/></clipPath><g clip-path="url(#cm)"><rect width="64" height="64" fill="#f4f4f2"/><path d="M0 0h14v28H0zM34 0h30v46z" fill="#6cc864"/><path d="M0 28l18 12v24H0z" fill="#e38bc4"/><path d="M34 48l22 16H34z" fill="#f6c443"/><path d="M40 0q4 22 24 24" stroke="#ddd" stroke-width="9" fill="none"/><path d="M16 0h15v30H16z" fill="#2e78ea"/></g><circle cx="24" cy="40" r="15" fill="#3b82f0" stroke="#fff" stroke-width="2.500"/><path d="M24 29l8 20-8-5-8 5z" fill="#fff"/></svg></div>
  <div class="app"><svg viewBox="0 0 64 64"><rect width="64" height="64" rx="15" fill="#fcfcfc"/><g opacity=".9"><ellipse cx="32" cy="17.500" rx="8.500" ry="13.500" fill="#f2973a"/><ellipse cx="32" cy="17.500" rx="8.500" ry="13.500" fill="#e8d83a" transform="rotate(45 32 32)"/><ellipse cx="32" cy="17.500" rx="8.500" ry="13.500" fill="#b4d24b" transform="rotate(90 32 32)"/><ellipse cx="32" cy="17.500" rx="8.500" ry="13.500" fill="#6dbb8b" transform="rotate(135 32 32)"/><ellipse cx="32" cy="17.500" rx="8.500" ry="13.500" fill="#6fb4e4" transform="rotate(180 32 32)"/><ellipse cx="32" cy="17.500" rx="8.500" ry="13.500" fill="#8e86cb" transform="rotate(225 32 32)"/><ellipse cx="32" cy="17.500" rx="8.500" ry="13.500" fill="#c278b0" transform="rotate(270 32 32)"/><ellipse cx="32" cy="17.500" rx="8.500" ry="13.500" fill="#ea5b4c" transform="rotate(315 32 32)"/></g><path d="M32 32L27 20M32 32l6-12M32 32l12-6M32 32l12 5M32 32l6 12M32 32l-5 12M32 32l-12 5M32 32l-12-6" stroke="#6b4a4a" stroke-width="1.200" opacity=".5"/></svg></div>
  <div class="app"><svg viewBox="0 0 64 64"><rect width="64" height="64" rx="15" fill="url(#gGreen)"/><rect x="9" y="18" width="31" height="28" rx="7" fill="#e6f3e3"/><path d="M43 29l9-8q2-1 2 1v20q0 2-2 1l-9-8z" fill="#d7eed3"/></svg></div>
  <div class="app"><svg viewBox="0 0 64 64"><rect width="64" height="64" rx="15" fill="#fafafa"/><path d="M0 20v-5A15 15 0 0 1 15 0h34a15 15 0 0 1 15 15v5z" fill="#e25c50"/><text x="32" y="15.500" text-anchor="middle" class="cal-m">MAR</text><text x="32" y="54" text-anchor="middle" class="cal-d">30</text></svg></div>
  <div class="app"><svg viewBox="0 0 64 64"><path d="M58 10h8v12h-8z" fill="#9a9a9a"/><path d="M58 22h8v12h-8z" fill="#58a6d8"/><path d="M58 34h8v11h-8z" fill="#e8842f"/><path d="M58 45h8v10h-8z" fill="#5fc05a"/><rect width="64" height="64" rx="13" fill="#a37a48"/><circle cx="33" cy="32" r="19.500" fill="#9b7342" stroke="#7c5a30" stroke-width="1.500"/><circle cx="33" cy="27" r="7" fill="#7c5a30"/><path d="M20 46q13-14 26 0-13 10-26 0z" fill="#7c5a30"/></svg></div>
  <div class="app"><svg viewBox="0 0 64 64"><rect width="64" height="64" rx="15" fill="#fbfbfb"/><path d="M25 16h33M25 32h33M25 48h33" stroke="#c4c4c8" stroke-width="1.600"/><g fill="none" stroke-width="1.500"><circle cx="13" cy="16" r="5" stroke="#2b7cf0"/><circle cx="13" cy="32" r="5" stroke="#e0463a"/><circle cx="13" cy="48" r="5" stroke="#e98d2e"/></g><circle cx="13" cy="16" r="3.300" fill="#2b7cf0"/><circle cx="13" cy="32" r="3.300" fill="#e0463a"/><circle cx="13" cy="48" r="3.300" fill="#e98d2e"/></svg></div>
  <div class="app"><svg viewBox="0 0 64 64"><rect width="64" height="64" rx="15" fill="#f3f2ee"/><path d="M0 16v-1A15 15 0 0 1 15 0h34a15 15 0 0 1 15 15v1z" fill="#f9cf4d"/><path d="M0 17h64" stroke="#b8b5ac" stroke-width="1.500"/><path d="M0 32h64M0 48h64" stroke="#d6d4ce" stroke-width="1.500"/></svg></div>
  <div class="app"><svg viewBox="0 0 64 64"><rect width="64" height="64" rx="15" fill="url(#gDark)"/><use href="#apple" x="8" y="19" width="20" height="24" fill="#fff"/><text x="41.500" y="42" text-anchor="middle" class="tv">tv</text></svg></div>
  <div class="app"><svg viewBox="0 0 64 64"><rect width="64" height="64" rx="15" fill="url(#gRed)"/><path d="M24 46V17l20-5v28" fill="none" stroke="#fff" stroke-width="3"/><path d="M23 15l22-5v8l-22 5z" fill="#fff"/><ellipse cx="18.500" cy="47" rx="6" ry="5" fill="#fff"/><ellipse cx="39.500" cy="43" rx="6" ry="5" fill="#fff"/></svg></div>
  <div class="app"><svg viewBox="0 0 64 64"><rect width="64" height="64" rx="15" fill="url(#gPod)"/><g fill="none" stroke="#fff" stroke-width="2.600"><path d="M23 50a22 22 0 1 1 18 0"/><path d="M24 42a14.500 14.500 0 1 1 16 0"/></g><circle cx="32" cy="28" r="5" fill="#fff"/><path d="M27 37q5-3 10 0l-1 15q-4 7-8 0z" fill="#fff"/></svg></div>
  <div class="app"><svg viewBox="0 0 64 64"><rect width="64" height="64" rx="15" fill="#fff"/><path d="M13 15q0-2 2-2h9l27 26v10q0 2-2 2h-9L13 25z" fill="#ea4a5c"/><path d="M34 13h15q2 0 2 2v15zM13 34l17 17H15q-2 0-2-2z" fill="#ea4a5c"/></svg></div>
  <div class="app"><svg viewBox="0 0 64 64"><rect width="64" height="64" rx="15" fill="url(#gSky)"/><path d="M15 9h34l2 18q0 2-2 2H15q-2 0-2-2z" fill="#f2f4f7"/><circle cx="32" cy="17" r="6" fill="#f0b33c"/><path d="M32 17v-6a6 6 0 0 0-5 9z" fill="#8756c5"/><path d="M32 17l5 4a6 6 0 0 1-9 0z" fill="#4cb15a"/><path d="M18 25h28" stroke="#9aa4ae" stroke-width="2"/><path d="M32 29v24" stroke="#e7ebf0" stroke-width="3"/><path d="M22 54h20" stroke="#dfe4ea" stroke-width="3" stroke-linecap="round"/></svg></div>
  <div class="app"><svg viewBox="0 0 64 64"><rect width="64" height="64" rx="15" fill="#6fdb55"/><g fill="#f6fbf4"><rect x="11" y="42" width="8" height="13" rx="1"/><rect x="23" y="30" width="8" height="25" rx="1"/><rect x="34" y="9" width="8" height="46" rx="1"/><rect x="45" y="21" width="8" height="34" rx="1"/></g></svg></div>
  <div class="app"><svg viewBox="0 0 64 64"><rect width="64" height="64" rx="15" fill="url(#gOrange)"/><path d="M52 12q3 2 0 7L20 48l-9 6 4-11L47 14q3-3 5-2z" fill="#f8f8f8"/><path d="M29 32l5 4" stroke="#888" stroke-width="1.500"/><path d="M22 54.500h32" stroke="#fbd9a8" stroke-width="2"/></svg></div>
  <div class="app"><svg viewBox="0 0 64 64"><rect width="64" height="64" rx="15" fill="url(#gStore)"/><g stroke="#fff" stroke-width="5" stroke-linecap="round"><path d="M36 14L20 41M17 46l-2 3M28 14l20 36M11 39h23M44 39h8"/></g></svg></div>
  <div class="app"><svg viewBox="0 0 64 64"><rect width="64" height="64" rx="15" fill="url(#gGear)"/><circle cx="32" cy="32" r="27" fill="#3d4043"/><circle cx="32" cy="32" r="24" fill="none" stroke="#a2a5a8" stroke-width="3" stroke-dasharray="1.500 1.500"/><circle cx="32" cy="32" r="19" fill="#54585b" stroke="#9a9da0" stroke-width="2.500"/><circle cx="32" cy="32" r="10" fill="#35383b"/><path d="M32 32h19M32 32l-10-17M32 32L22 49" stroke="#a8abae" stroke-width="3"/><circle cx="32" cy="32" r="3" fill="#a8abae"/></svg></div>
  <div class="app"><svg viewBox="0 0 64 64"><rect x="1" width="62" height="64" rx="14" fill="#b5b9bc"/><rect x="2.500" y="3" width="59" height="59" rx="12" fill="#050505"/><rect x="6" y="7" width="52" height="50" rx="9" fill="#262626"/><path d="M10 12l7 5-7 4M21 24h9" fill="none" stroke="#fff" stroke-width="2.200"/></svg></div>
  <div class="app run"><svg viewBox="0 0 64 64"><rect width="64" height="64" rx="15" fill="#fff"/><use href="#wordmark"/></svg></div>
  <div class="app"><svg viewBox="0 0 64 64"><rect width="64" height="64" rx="15" fill="#fff"/><path d="M17 11h35v42H17z" fill="#3b9be6"/><path d="M17 11h24v14H17z" fill="#2868ac"/><path d="M40 11h12v14H40zM30 25h12v12H30z" fill="#4cc2f4"/><path d="M17 37l35-10v26H17z" fill="#54b6ee"/><path d="M17 34l35 19H17z" fill="#2f8bdc"/><rect x="6" y="20" width="24" height="24" rx="2" fill="#1e62bb"/><text x="18" y="39" text-anchor="middle" class="tile-letter">O</text></svg></div>
  <div class="app"><svg viewBox="0 0 64 64"><rect width="64" height="64" rx="15" fill="#fff"/><path d="M42 10L10 39l4 4 4 1 24-18z" fill="#2f7fc4"/><path d="M14 21l-4 4 32 29V40z" fill="#2a6aa8"/><path d="M42 9l12 6v34l-12 6z" fill="#3fa0e6"/></svg></div>
  <div class="app"><svg viewBox="0 0 64 64"><rect width="64" height="64" rx="13" fill="#f8f8f8"/><path d="M0 16h64M0 24h64M0 32h64M0 40h64M0 48h64M0 56h64" stroke="#c9c9c9" stroke-width="1.300"/><path d="M11 0v64" stroke="#efa8a8" stroke-width="1.300"/><path d="M56-6l5 2-27 60-9 12 4-15z" fill="#8f9ba5"/><path d="M58-4L30 55" stroke="#dfe6ea" stroke-width="1.800"/></svg></div>
  <i class="sep"></i>
  <div class="app run"><svg viewBox="0 0 64 64"><rect width="64" height="64" rx="15" fill="#f4f4f4"/><circle cx="32" cy="32" r="27" fill="#fbcb4a"/><path d="M8.600 18.500A27 27 0 0 1 55.400 18.500H32z" fill="#d6483b"/><path d="M8.600 18.500A27 27 0 0 0 32 59l12-20.500-12 7-12-7z" fill="#3d9f58"/><path d="M8.600 18.500L20 39l12-20.500z" fill="#d6483b"/><circle cx="32" cy="32" r="13" fill="#fff"/><circle cx="32" cy="32" r="10.300" fill="#5089ee"/></svg></div>
  <div class="app run"><svg class="big" viewBox="0 0 68 68"><path d="M0 0h68v68H0z" fill="#f8f8f8"/><use href="#spark" width="68" height="68"/></svg></div>
  <div class="app"><svg viewBox="0 0 64 64"><rect width="64" height="64" rx="15" fill="#eee"/><clipPath id="pv"><rect x="4" y="5" width="55" height="54" rx="11"/></clipPath><g clip-path="url(#pv)"><path d="M0 0h64v36H0z" fill="#8db8ee"/><path d="M0 35h64v12H0z" fill="#1f4a86"/><path d="M0 42l10 3 8-5 8 6 8-3v21H0z" fill="#e6edf2"/><path d="M4 46l8 5 6-3 7 6-2 8H4z" fill="#5f6a70"/></g><path d="M33 43h27l5 21q-1 4-6 4H34q-6 0-5-4z" fill="#c9ced2" stroke="#777" stroke-width="1"/><rect x="33" y="31" width="28" height="14" rx="4" fill="#17191b"/><ellipse cx="47" cy="33" rx="13" ry="3" fill="#4c5054"/><path d="M38 50l8 10 8-10 3 12H36z" fill="#8c9296"/></svg></div>
  <i class="sep s2"></i>
  <svg class="folder" viewBox="0 0 66 70"><path d="M5 0h38v12H5zM60 8h5v60h-5z" fill="#43a0d0"/><path d="M12 1h26v8H12z" fill="#f5f5f5"/><path d="M22 1h8v7h-8z" fill="#333"/><path d="M0 6h62v63H0z" fill="#f6f6f6"/><use href="#spark" x="4" y="9" width="58" height="58"/><path d="M9 6h13v63H9z" fill="#c2a877"/><path d="M9 69V57l6.500-6.500L22 57v12z" fill="#a9925f"/><path d="M10 56l5.500-6 5.500 6" fill="none" stroke="#7a673c" stroke-width="1.500"/></svg>
  <svg class="thumb-doc" viewBox="0 0 75 54"><path d="M0 0h75v34H0z" fill="#e9e9ec"/><path d="M0 0h75v3H0z" fill="#2b5fae"/><path d="M2 8h71" stroke="#b5b8bd" stroke-width="5" stroke-dasharray="3 2"/><path d="M12 13h50v21H12z" fill="#fff"/><path d="M18 22h38M18 25h18" stroke="#999" stroke-width="1.200"/><rect x="50" y="29" width="23" height="24" rx="5" fill="#fff"/><use href="#wordmark" x="50" y="29" width="24" height="24"/></svg>
  <svg class="trash" viewBox="0 0 58 76"><path d="M2 8L14 2l8 4 10-5 8 5 8-3 8 6-4 10H6z" fill="#d8dade"/><path d="M12 6l8 4-7 4zM30 3l6 8-10 1zM46 6l4 7-9 0z" fill="#5d6468"/><path d="M22 9l6 3-5 3z" fill="#4bb3a8"/><path d="M1 13h56l-6 55q-1 6-8 6H15q-7 0-8-6z" fill="#d9d9e0"/><path d="M13 16l5 54M30 16v56M45 16l-4 54" stroke="#ebebf0" stroke-width="5"/><ellipse cx="29" cy="13" rx="28" ry="4" fill="none" stroke="#f6f6f8" stroke-width="1.500"/></svg>
</footer>
</body>
</html>
```
FILE: styles.css
```css
* { box-sizing: border-box; }
body { margin: 0; width: 2880px; height: 1800px; overflow: hidden; background: #17104d; font-family: Inter, "Liberation Sans", sans-serif; color: #333; position: relative; }
h1, h2, h3, p, ul { margin: 0; padding: 0; font-weight: 400; }
ul { list-style: none; }
svg { display: block; overflow: visible; flex: none; }
.defs { position: absolute; }
.wallpaper { position: absolute; left: 0; top: 0; width: 2880px; height: 1800px; }
.menubar, .window, .dock { position: relative; }

.menubar { height: 48px; display: flex; align-items: center; background: linear-gradient(90deg, #eaacd8 0, #e8b4dc 20%, #e3c9e6 38%, #e8d2e8 66%, #ebcbe3 80%, #ecbfde 100%); font-size: 26px; color: #231c22; white-space: nowrap; }
.apple { width: 26px; height: 31px; margin: -4px 0 0 40px; }
.menus { display: flex; width: 1460px; margin-left: 40px; letter-spacing: -.2px; }
.menus span { margin-top: -3px; }
.m-app { width: 230px; font-weight: 700; letter-spacing: .15px; }
.m1 { width: 83px; } .m2 { width: 97px; } .m3 { width: 170px; } .m4 { width: 173px; } .m5 { width: 105px; }
.m6 { width: 140px; } .m7 { width: 93px; } .m8 { width: 126px; } .m9 { width: 139px; } .m10 { width: 70px; }
.tray { width: 400px; height: 48px; margin-left: 584px; }
.clock { margin: -3px 0 0 29px; letter-spacing: -.25px; }

.window { margin-top: 2px; width: 2878px; height: 1602px; border-radius: 22px; overflow: hidden; background: #f4f4f4; display: flex; flex-direction: column; }
.titlebar { height: 57px; flex: none; background: #f5f0f7; border-bottom: 1.500px solid #cfcad1; border-top: 1px solid #fff; display: flex; align-items: center; gap: 16px; padding-left: 16px; }
.light { width: 24px; height: 24px; border-radius: 50%; border: 1px solid #d85b50; background: #ee6a5f; }
.yellow { background: #f5bd4f; border-color: #dca03c; }
.green.light { background: #61c554; border-color: #4fa83f; }
.titlebar h1 { flex: 1; padding-right: 140px; margin-top: -3px; text-align: center; font-size: 26px; font-weight: 700; letter-spacing: .2px; color: #3a373b; }

.toolbar { height: 79px; flex: none; display: flex; align-items: center; background: #f4f4f4; }
.tg { height: 70px; border-right: 2px solid #d2d2d2; }
.tg.g1 { width: 96px; } .g2 { width: 364px; } .g3 { width: 252px; } .g4 { width: 220px; }
.tg.g5 { width: 316px; border: 0; } .g6 { width: 172px; }
.select { width: 196px; height: 46px; border: 2px solid #ccc; border-radius: 2px; margin-right: 30px; display: flex; align-items: center; font-size: 23.500px; }
.select + .tg { border-left: 2px solid #d2d2d2; width: 174px; }
.select span { flex: 1; padding-left: 14px; margin-top: -1px; }
.select svg { width: 36px; height: 42px; border-left: 1px solid #ddd; }
.t-serif { font-family: "Liberation Serif", serif; fill: #555; }
.showme { margin-left: 1030px; display: flex; align-items: center; gap: 11px; font-family: Roboto, sans-serif; font-size: 25px; letter-spacing: -.5px; color: #111; white-space: nowrap; }
.showme svg { width: 32px; height: 30px; }

.workspace { height: 1364px; flex: none; display: flex; gap: 12px; }
.data-pane { width: 420px; border-top: 2px solid #d3d3d3; border-right: 2px solid #d3d3d3; background: #fff; }
.pane-tabs { display: flex; height: 57px; font-size: 24px; }
.pane-tabs b { width: 156px; padding: 10px 0 0 36px; color: #222; letter-spacing: -.2px; }
.pane-tabs div { flex: 1; background: #fafafa; border: solid #d3d3d3; border-width: 0 0 2px 2px; display: flex; justify-content: space-between; padding: 11px 14px 0 24px; letter-spacing: -.25px; }
.pane-tabs svg { width: 12px; height: 22px; margin-top: 4px; }
.source { height: 58px; border-bottom: 2px solid #e5e5e5; display: flex; align-items: center; padding: 0 0 3px 38px; gap: 10px; font-size: 24px; letter-spacing: -.3px; }
.source svg { width: 36px; height: 36px; }
.search-row { display: flex; padding: 21px 0 0 16px; gap: 4px; }
.search { width: 264px; height: 46px; border: 2px solid #ccc; border-radius: 3px; display: flex; justify-content: space-between; align-items: center; padding: 0 11px 0 16px; font-size: 23.500px; color: #8c8c8c; }
.search svg { width: 20px; height: 20px; }
.filter-tools { width: 130px; height: 46px; }
.data-pane h2 { font-size: 24px; font-weight: 700; color: #000; padding: 18px 0 0 36px; line-height: 30px; letter-spacing: -.8px; }
.fields { padding-top: 10px; font-size: 24px; color: #000; }
.fields li { height: 42px; display: flex; align-items: center; padding-left: 42px; letter-spacing: -.25px; white-space: pre; }
.fields em { letter-spacing: -.6px; }
.fields .count { letter-spacing: -.35px; }
.tight { letter-spacing: -.55px; }
.loose { letter-spacing: -.05px; }
.fields i { width: 52px; font: 18.500px "Open Sans", sans-serif; color: #3d7f9e; margin-top: 5px; letter-spacing: -.3px; }
.fields svg { width: 32px; height: 24px; margin-right: 20px; }
.fields .fd { height: 28px; margin-top: 8px; }
.fields .fi { margin-top: 4px; }
.fields.measures { margin: 2px 0 0; padding-top: 0; }
.measures::before { content: ""; display: block; height: 2px; margin: 0 12px 0 30px; background: #ddd; }

.cards { width: 308px; display: flex; flex-direction: column; gap: 12px; }
.card { border: 2px solid #d3d3d3; background: #fafafa; padding: 0 8px; }
.card h3 { font-size: 24px; line-height: 30px; padding: 15px 0 0 4px; letter-spacing: -.1px; }
.pages { height: 124px; } .filters { height: 248px; } .marks { height: 436px; }
.filters h3 { margin-bottom: 19px; }
.pill { height: 40px; border-radius: 20px; font-size: 24px; line-height: 39px; color: #fff; padding-left: 21px; margin-bottom: 6px; white-space: nowrap; letter-spacing: -.2px; }
.pill.narrow { letter-spacing: -.5px; }
.pill.green { background: #00b180; }
.pill.blue { background: #4996b2; }
.mark-type { height: 42px; margin: 25px 4px 0 4px; border: 2px solid #666; border-radius: 2px; display: flex; align-items: center; font-size: 20.500px; letter-spacing: -.3px; }
.zig { width: 24px; height: 14px; margin: -4px 11px 0 23px; }
.mark-type span { flex: 1; margin-top: -1px; }
.arrow { width: 36px; height: 38px; border-left: 1px solid #ddd; }
.mark-grid { display: grid; grid-template-columns: 86px 84px 86px; gap: 12px; margin: 12px 0 0 4px; }
.mark-grid div { height: 84px; border: 2px solid #d3d3d3; text-align: center; font-size: 20px; line-height: 24px; letter-spacing: -.1px; }
.mark-grid svg { width: 30px; height: 28px; margin: 11px auto 13px; }
.mark-pill { display: flex; align-items: center; margin: 18px 0 0 17px; gap: 9px; }
.mark-pill svg { width: 28px; height: 28px; }
.mark-pill .pill { width: 222px; margin: 0; }

.canvas { width: 2114px; display: flex; flex-direction: column; gap: 12px; }
.shelf { height: 56px; border: 2px solid #d3d3d3; background: #fafafa; display: flex; align-items: center; }
.shelf-name { width: 249px; height: 52px; border-right: 2px solid #ddd; display: flex; align-items: center; gap: 12px; padding-left: 12px; font-size: 24px; letter-spacing: -.2px; margin-right: 5px; }
.shelf-name svg { width: 26px; height: 26px; }
.shelf .pill { margin: 2px 4px 2px 0; width: 296px; display: flex; align-items: center; gap: 11px; padding-left: 23px; }
.shelf .min { letter-spacing: -.3px; }
.shelf .cnt { letter-spacing: -.3px; padding-left: 21px; }
.wide svg { width: 20px; height: 20px; }
.stage { display: flex; gap: 12px; }
.viz { width: 1794px; height: 1216px; border: 2px solid #d3d3d3; background: #fff; }
.plot { width: 1790px; height: 1120px; }
.book { font-family: "Noto Sans", "Open Sans", sans-serif; fill: #333; }
.title { font-size: 41px; font-weight: 300; }
.semi { font-size: 24px; font-weight: 600; }
.tick { font-size: 25px; font-weight: 300; fill: #555; }
.axis { font-size: 23px; }
.x-axis { height: 40px; width: 1624px; margin-left: 150px; border: solid #c8c8c8; border-width: 0 2px; overflow: hidden; display: flex; background: #fff; }
.x-axis span { flex: 0 0 40px; text-align: center; font: 300 25.500px/42px "Noto Sans", sans-serif; color: #444; letter-spacing: -.3px; background: linear-gradient(#e8e8e8, #e8e8e8) right 0 top 0 / 1px 7px no-repeat; padding-right: 4px; }
.x-axis .last { flex-basis: 20px; padding: 0; text-align: right; background: none; }
.track { margin: 8px 0 0 150px; width: 1630px; height: 34px; background: #fafafa; border: solid #e8e8e8; border-width: 2px 0; padding: 10px 6px; }
.thumb { width: 275px; height: 16px; border-radius: 8px; background: #7f7f7f; }
.legends { display: flex; flex-direction: column; gap: 12px; }
.legend { width: 308px; border: 2px solid #d3d3d3; background: #fff; font: 300 24px "Noto Sans", sans-serif; letter-spacing: -.3px; }
.legend h3 { height: 58px; background: #fafafa; font: 24px/58px Inter, sans-serif; padding-left: 12px; margin-bottom: 6px; letter-spacing: -.2px; }
.checks { height: 228px; } .colors { height: 184px; }
.legend p { display: flex; align-items: center; color: #333; }
.checks p { height: 38px; padding-left: 12px; gap: 11px; }
.checks svg { width: 30px; height: 30px; }
.colors h3 { margin-bottom: 0; line-height: 60px; }
.colors p { height: 40px; gap: 11px; padding-left: 6px; }
.colors b { width: 28px; height: 28px; }
.c-female { background: #4e79a7; } .c-male { background: #f28e2b; } .c-unknown { background: #e15759; }

.sheets { height: 62px; flex: none; border-top: 2px solid #c8c8c8; border-bottom: 2px solid #ccc; background: #e6e6e6; display: flex; font-size: 24px; letter-spacing: -.6px; color: #555; }
.sheets div { border-right: 2px solid #ccc; padding-left: 12px; line-height: 58px; white-space: nowrap; overflow: hidden; flex: none; }
.sheets .active { background: #fafafa; font-weight: 700; letter-spacing: -.4px; line-height: 56px; }
.sheets .s0 { width: 262px; display: flex; align-items: center; gap: 12px; padding-left: 20px; }
.s0 svg { width: 16px; height: 24px; }
.s1 { width: 363px; } .s2 { width: 374px; } .s3 { width: 328px; } .s4 { width: 400px; } .s5 { width: 400px; } .s6 { width: 324px; } .sheets .s7 { width: 234px; }
.sheet-tools { width: 191px; height: 58px; }
.status { flex: 1; display: flex; align-items: center; background: linear-gradient(#ebebeb, #e0e0e0); color: #000; font-size: 20.500px; letter-spacing: -.35px; white-space: nowrap; padding-left: 24px; }
.st1 { width: 133px; } .st2 { width: 235px; } .st3 { width: 1734px; }
.user, .status i, .pager, .views { height: 40px; border-left: 2px solid #ccc; flex: none; }
.user { width: 254px; display: flex; align-items: center; padding-left: 12px; }
.user svg { width: 22px; height: 28px; }
.user span { margin-left: 19px; width: 171px; }
.user svg.tri { width: 14px; height: 8px; }
.w1 { width: 54px; } .w2 { width: 94px; }
.pager { width: 142px; } .views { width: 153px; }

.dock { margin: 36px 0 0 66px; width: 2748px; height: 102px; border-radius: 28px; border: 2px solid rgba(255,255,255,.2); background: linear-gradient(90deg, #7d62d4 0, #6c62d6 30%, #6f63dc 43%, #8560f5 47%, #8a60f7 63%, #ae5ff8 71%, #ae5ff8 82%, #8f60f8 95%, #8c60f5 100%); background-clip: padding-box; display: flex; align-items: flex-start; padding: 13px 0 0 4.400px; }
.app { flex: 0 0 83.200px; display: flex; flex-direction: column; align-items: center; }
.app svg { width: 64px; height: 64px; }
.app svg.big { width: 68px; height: 68px; margin-top: -2px; margin-bottom: -2px; }
.run::after { content: ""; width: 8px; height: 8px; border-radius: 50%; background: #2a0f80; margin-top: 11px; }
.sep { width: 2px; height: 74px; background: #5a28c0; margin: -2px 17px 0 18px; flex: none; }
.sep.s2 { margin: -2px 30px 0 17px; }
.folder { width: 66px; height: 70px; margin-top: -3px; }
.thumb-doc { width: 75px; height: 54px; margin: 16px 0 0 9px; }
.trash { width: 58px; height: 76px; margin: -6px 0 0 18px; }
.tile-letter { font: 700 20px Inter, sans-serif; fill: #fff; }
.cal-m { font: 600 15px Inter, sans-serif; fill: #fff; }
.cal-d { font: 300 40px Inter, sans-serif; letter-spacing: -1px; fill: #222; }
.tv { font: 500 25px Inter, sans-serif; fill: #fff; }
```
